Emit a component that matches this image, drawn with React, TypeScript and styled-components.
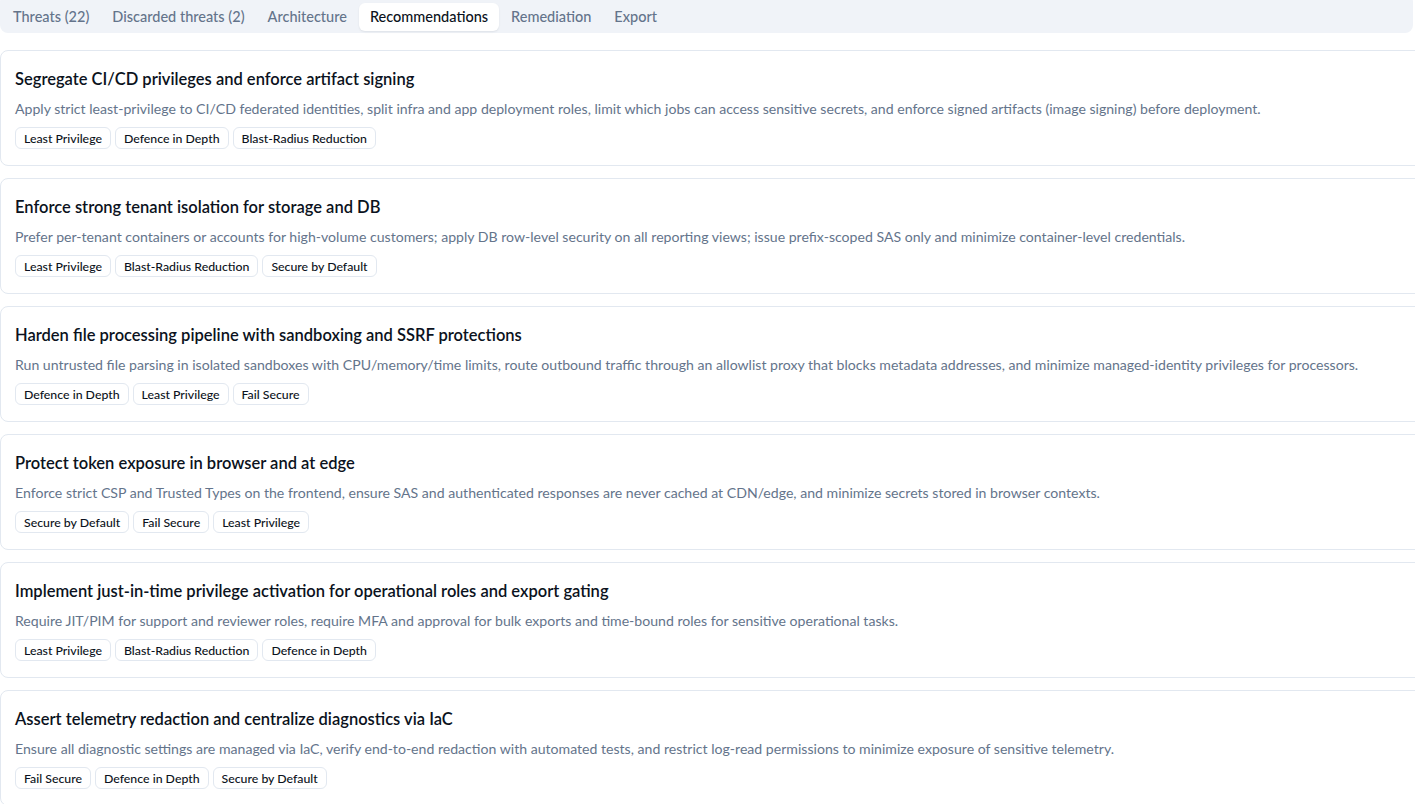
import * as React from "react";
import styled, { createGlobalStyle } from "styled-components";

const GlobalStyle = createGlobalStyle`
  html, body {
    margin: 0;
    padding: 0;
    background: #ffffff;
    overflow: hidden;
  }
  body {
    font-family: "Segoe UI", Lato, "Liberation Sans", sans-serif;
    color: #0f172a;
  }
`;

const Page = styled.div`
  width: 1428px;
  margin-top: -6px;
`;

const TabBar = styled.div`
  display: flex;
  align-items: center;
  gap: 1px;
  height: 33px;
  padding: 6px 2px 0 2px;
  box-sizing: content-box;
  background: #f0f3f8;
  border-radius: 8px;
  width: 1409px;
`;

const Tab = styled.button<{ $active?: boolean }>`
  border: none;
  font-family: inherit;
  font-size: 14.5px;
  font-weight: 500;
  height: 28px;
  padding: 0 11px;
  border-radius: 6px;
  cursor: pointer;
  background: ${(p) => (p.$active ? "#ffffff" : "transparent")};
  color: ${(p) => (p.$active ? "#0b1220" : "#64748b")};
  box-shadow: ${(p) => (p.$active ? "0 1px 2px rgba(15, 23, 42, 0.08)" : "none")};
`;

const List = styled.div`
  display: flex;
  flex-direction: column;
  gap: 12px;
  margin-top: 17px;
`;

const Card = styled.div`
  border: 1px solid #e2e8f0;
  border-radius: 8px;
  padding: 16px 14px 16px 14px;
  background: #fff;
`;

const Title = styled.h3`
  margin: 0;
  font-size: 16.5px;
  line-height: 24px;
  font-weight: 600;
  color: #0b1220;
`;

const Desc = styled.p`
  margin: 8px 0 0 0;
  font-size: 14.1px;
  line-height: 20px;
  color: #64748b;
`;

const Tags = styled.div`
  display: flex;
  gap: 4px;
  margin-top: 8px;
`;

const Tag = styled.span`
  display: inline-flex;
  align-items: center;
  height: 22px;
  box-sizing: border-box;
  padding: 0 8px;
  border: 1px solid #e2e8f0;
  border-radius: 6px;
  font-size: 12.3px;
  font-weight: 500;
  color: #0b1220;
  background: #fff;
`;

type Rec = { title: string; desc: string; tags: string[] };

const recs: Rec[] = [
  {
    title: "Segregate CI/CD privileges and enforce artifact signing",
    desc: "Apply strict least-privilege to CI/CD federated identities, split infra and app deployment roles, limit which jobs can access sensitive secrets, and enforce signed artifacts (image signing) before deployment.",
    tags: ["Least Privilege", "Defence in Depth", "Blast-Radius Reduction"],
  },
  {
    title: "Enforce strong tenant isolation for storage and DB",
    desc: "Prefer per-tenant containers or accounts for high-volume customers; apply DB row-level security on all reporting views; issue prefix-scoped SAS only and minimize container-level credentials.",
    tags: ["Least Privilege", "Blast-Radius Reduction", "Secure by Default"],
  },
  {
    title: "Harden file processing pipeline with sandboxing and SSRF protections",
    desc: "Run untrusted file parsing in isolated sandboxes with CPU/memory/time limits, route outbound traffic through an allowlist proxy that blocks metadata addresses, and minimize managed-identity privileges for processors.",
    tags: ["Defence in Depth", "Least Privilege", "Fail Secure"],
  },
  {
    title: "Protect token exposure in browser and at edge",
    desc: "Enforce strict CSP and Trusted Types on the frontend, ensure SAS and authenticated responses are never cached at CDN/edge, and minimize secrets stored in browser contexts.",
    tags: ["Secure by Default", "Fail Secure", "Least Privilege"],
  },
  {
    title: "Implement just-in-time privilege activation for operational roles and export gating",
    desc: "Require JIT/PIM for support and reviewer roles, require MFA and approval for bulk exports and time-bound roles for sensitive operational tasks.",
    tags: ["Least Privilege", "Blast-Radius Reduction", "Defence in Depth"],
  },
  {
    title: "Assert telemetry redaction and centralize diagnostics via IaC",
    desc: "Ensure all diagnostic settings are managed via IaC, verify end-to-end redaction with automated tests, and restrict log-read permissions to minimize exposure of sensitive telemetry.",
    tags: ["Fail Secure", "Defence in Depth", "Secure by Default"],
  },
];

const tabs = [
  "Threats (22)",
  "Discarded threats (2)",
  "Architecture",
  "Recommendations",
  "Remediation",
  "Export",
];

export default function App() {
  const [active, setActive] = React.useState("Recommendations");
  return (
    <>
      <GlobalStyle />
      <Page>
        <TabBar>
          {tabs.map((t) => (
            <Tab key={t} $active={t === active} onClick={() => setActive(t)}>
              {t}
            </Tab>
          ))}
        </TabBar>
        <List>
          {recs.map((r) => (
            <Card key={r.title}>
              <Title>{r.title}</Title>
              <Desc>{r.desc}</Desc>
              <Tags>
                {r.tags.map((tag) => (
                  <Tag key={tag}>{tag}</Tag>
                ))}
              </Tags>
            </Card>
          ))}
        </List>
      </Page>
    </>
  );
}
